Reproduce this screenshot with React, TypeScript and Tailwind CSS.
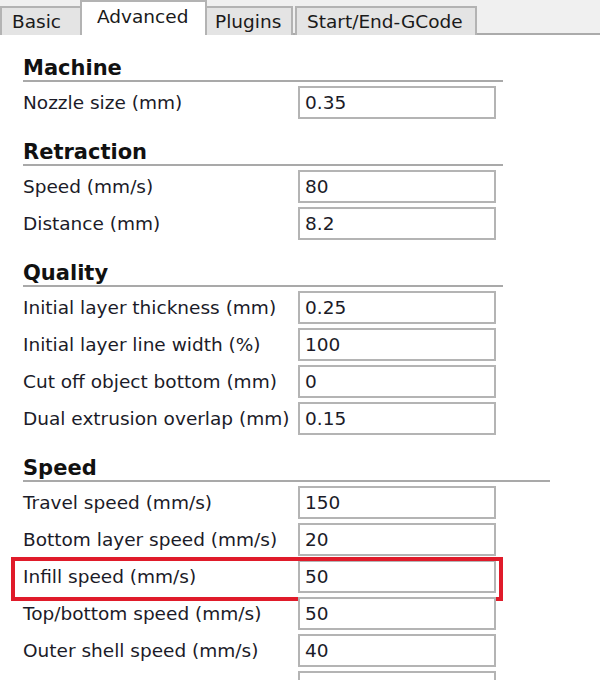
import React from "react";

type Row = { label: string; value: string; highlight?: boolean };
type Section = { title: string; rows: Row[]; wide?: boolean };

const sections: Section[] = [
  { title: "Machine", rows: [{ label: "Nozzle size (mm)", value: "0.35" }] },
  {
    title: "Retraction",
    rows: [
      { label: "Speed (mm/s)", value: "80" },
      { label: "Distance (mm)", value: "8.2" },
    ],
  },
  {
    title: "Quality",
    rows: [
      { label: "Initial layer thickness (mm)", value: "0.25" },
      { label: "Initial layer line width (%)", value: "100" },
      { label: "Cut off object bottom (mm)", value: "0" },
      { label: "Dual extrusion overlap (mm)", value: "0.15" },
    ],
  },
  {
    title: "Speed",
    wide: true,
    rows: [
      { label: "Travel speed (mm/s)", value: "150" },
      { label: "Bottom layer speed (mm/s)", value: "20" },
      { label: "Infill speed (mm/s)", value: "50", highlight: true },
      { label: "Top/bottom speed (mm/s)", value: "50" },
      { label: "Outer shell speed (mm/s)", value: "40" },
      { label: "", value: "" },
    ],
  },
];

const Tabs = () => (
  <div className="relative h-[35px] bg-[#f0f0f0] border-b-2 border-[#ababab]">
    <div className="absolute left-0 bottom-[-2px] flex items-end text-[18.5px] text-[#1a1a1a]">
      {/* inactive tabs sit lower than the selected one */}
      <div className="w-[82px] h-[29px] pl-[10px] leading-[27px] bg-[#e4e4e4] border-2 border-b-0 border-[#b3b3b3]">
        Basic
      </div>
      <div className="relative z-10 -ml-[2px] w-[127px] h-[35px] pl-[15px] leading-[30px] bg-white border-2 border-b-0 border-[#b3b3b3]">
        Advanced
      </div>
      <div className="-ml-[2px] w-[88px] h-[29px] pl-[8px] leading-[27px] bg-[#e4e4e4] border-2 border-b-0 border-[#b3b3b3]">
        Plugins
      </div>
      <div className="ml-[2px] w-[182px] h-[29px] pl-[10px] leading-[27px] bg-[#e4e4e4] border-2 border-b-0 border-[#b3b3b3]">
        Start/End-GCode
      </div>
    </div>
  </div>
);

const Field = ({ row }: { row: Row }) => (
  <div className="relative flex items-center h-[33px]">
    <div className="w-[275px] shrink-0 text-[18.5px] text-[#1b1b28] whitespace-nowrap">
      {row.label}
    </div>
    <div className="w-[198px] h-[33px] border-2 border-[#b4b4b4] bg-white px-[5px] flex items-center text-[18.5px] text-[#1b1b28]">
      {row.value}
    </div>
    {row.highlight && (
      <div className="absolute -left-[12px] -top-[3px] w-[492px] h-[44px] border-4 border-[#e01b2a]" />
    )}
  </div>
);

export default function App() {
  return (
    <div
      className="w-[600px] h-[680px] overflow-hidden bg-white"
      style={{ fontFamily: '"DejaVu Sans", Verdana, sans-serif' }}
    >
      <Tabs />
      <div className="pl-[23px]">
        {sections.map((s) => (
          <div key={s.title}>
            <div
              className={`h-[47px] ${
                s.wide ? "w-[527px]" : "w-[480px]"
              } flex items-end border-b-2 border-[#a9a9a9] text-[21px] leading-[24px] font-bold text-[#111]`}
            >
              {s.title}
            </div>
            <div className="flex flex-col gap-[4px] pt-[4px]">
              {s.rows.map((r, j) => (
                <Field key={j} row={r} />
              ))}
            </div>
          </div>
        ))}
      </div>
    </div>
  );
}
